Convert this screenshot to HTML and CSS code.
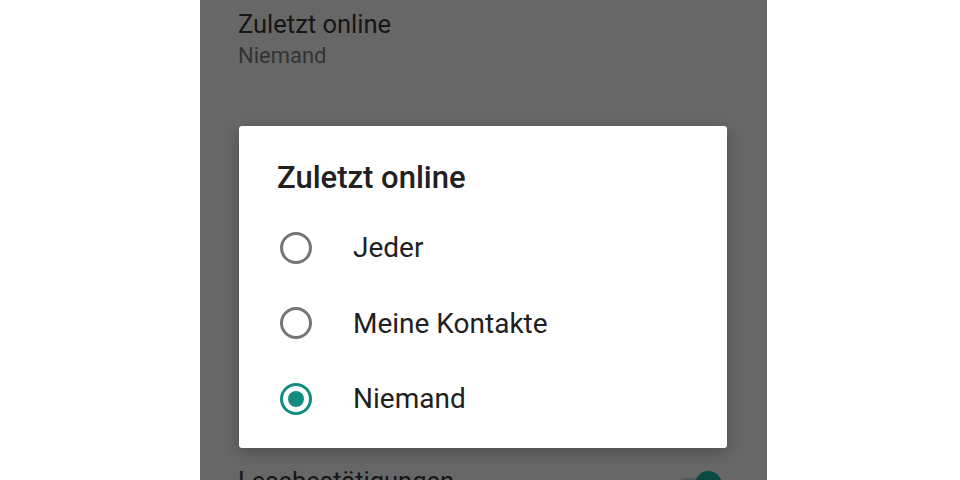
FILE: index.html
```html
<!DOCTYPE html>
<html lang="de">
<head>
<meta charset="utf-8">
<link rel="stylesheet" href="styles.css">
</head>
<body>
<div class="phone">
  <div class="list">
    <div class="item">
      <div class="item-title">Zuletzt online</div>
      <div class="item-sub">Niemand</div>
    </div>
    <div class="item bottom">
      <div class="item-title">Lesebestätigungen</div>
      <div class="switch"><span class="track"></span><span class="thumb"></span></div>
    </div>
  </div>
  <div class="dialog">
    <div class="dialog-title">Zuletzt online</div>
    <div class="option">
      <span class="radio"></span>
      <span class="label">Jeder</span>
    </div>
    <div class="option">
      <span class="radio"></span>
      <span class="label">Meine Kontakte</span>
    </div>
    <div class="option">
      <span class="radio checked"></span>
      <span class="label">Niemand</span>
    </div>
  </div>
</div>
</body>
</html>
```
FILE: styles.css
```css
html, body {
  margin: 0;
  padding: 0;
  background: #ffffff;
  font-family: Roboto, "Noto Sans", sans-serif;
}
.phone {
  position: relative;
  margin-left: 200px;
  width: 567px;
  height: 480px;
  background: #676767;
  overflow: hidden;
}
.list {
  display: flex;
  flex-direction: column;
  padding-left: 38px;
  padding-right: 45px;
}
.item-title {
  font-size: 25.5px;
  line-height: 30px;
  color: #161616;
  padding-top: 9px;
}
.item-sub {
  font-size: 22px;
  line-height: 26px;
  color: #333333;
  margin-top: 4px;
}
.item.bottom {
  display: flex;
  align-items: flex-start;
  justify-content: space-between;
  margin-top: 397px;
}
.item.bottom .item-title {
  padding-top: 0;
}
.switch {
  position: relative;
  width: 44px;
  height: 28px;
  margin-top: 5px;
}
.track {
  position: absolute;
  left: 0;
  top: 7px;
  width: 38px;
  height: 15px;
  border-radius: 8px;
  background: #4f5c5a;
}
.thumb {
  position: absolute;
  right: 0;
  top: 0;
  width: 27px;
  height: 27px;
  border-radius: 50%;
  background: #0b4a42;
}
.dialog {
  position: absolute;
  left: 39px;
  top: 126px;
  width: 488px;
  height: 322px;
  box-sizing: border-box;
  background: #ffffff;
  border-radius: 3px;
  box-shadow: 0 4px 14px rgba(0,0,0,0.25);
  padding: 33px 0 0 38px;
}
.dialog-title {
  font-size: 31px;
  font-weight: 500;
  color: #212121;
  line-height: 38px;
  margin-bottom: 13px;
}
.option {
  display: flex;
  align-items: center;
  height: 75.5px;
}
.radio {
  width: 26px;
  height: 26px;
  border: 3px solid #757575;
  border-radius: 50%;
  margin-left: 3px;
  margin-right: 41px;
  display: flex;
  align-items: center;
  justify-content: center;
  flex: none;
}
.radio.checked {
  border-color: #128c7e;
}
.radio.checked::after {
  content: "";
  width: 16px;
  height: 16px;
  border-radius: 50%;
  background: #128c7e;
}
.label {
  font-size: 28px;
  color: #212121;
}
```
